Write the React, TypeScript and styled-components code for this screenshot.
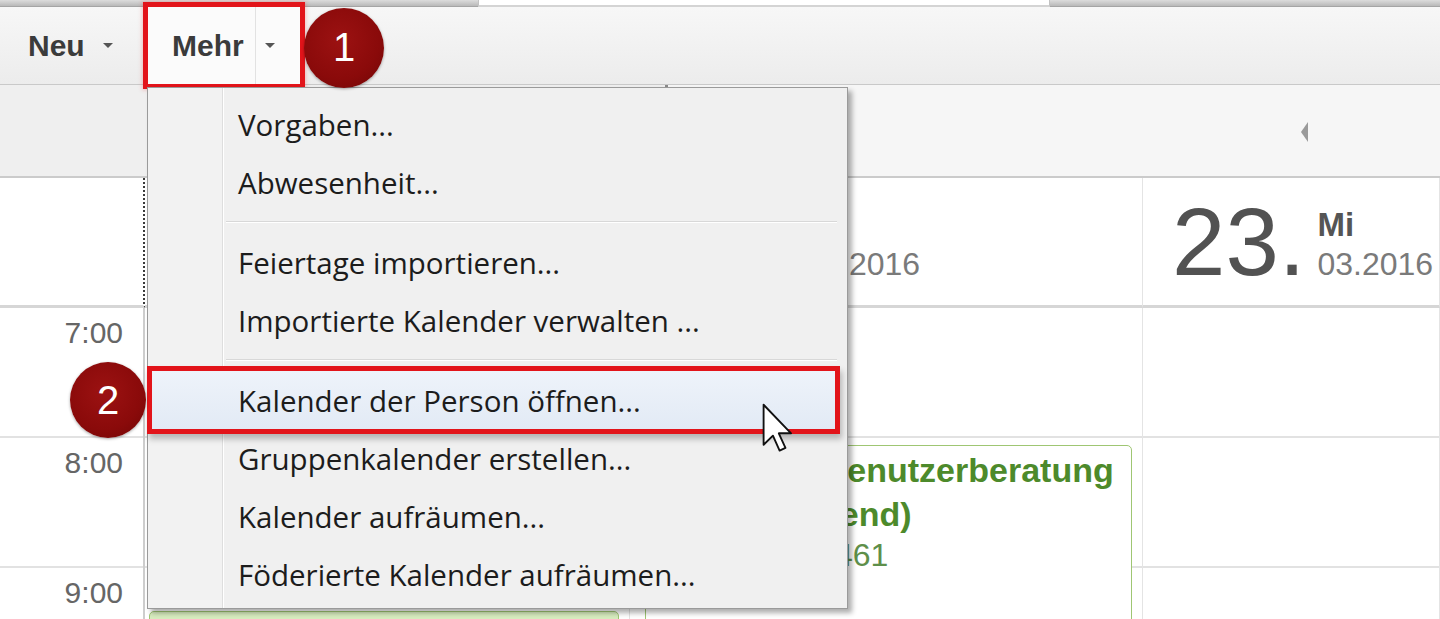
import React from 'react';
import styled, { createGlobalStyle } from 'styled-components';

const GlobalStyle = createGlobalStyle`
  html, body {
    margin: 0;
    padding: 0;
    background: #fff;
  }
  body {
    font-family: "Liberation Sans", Arial, sans-serif;
  }
`;

const HOUR = 130;
const FIRST_HOUR = 7;

const Page = styled.div`
  position: relative;
  width: 1440px;
  height: 619px;
  overflow: hidden;
  display: flex;
  flex-direction: column;
  background: #fff;
`;

/* ---------- tab strip ---------- */
const TabStrip = styled.div`
  display: flex;
  height: 7px;
  flex: none;
`;
const TabGap = styled.div<{ $w?: number }>`
  width: ${p => (p.$w ? `${p.$w}px` : 'auto')};
  flex: ${p => (p.$w ? 'none' : '1')};
  background: linear-gradient(#dcdcdc, #b9b9b9);
  border-bottom: 1px solid #a5a5a5;
`;
const ActiveTab = styled.div`
  width: 570px;
  background: #fff;
  border-left: 1px solid #c2c2c2;
  border-right: 1px solid #c2c2c2;
  border-bottom: 2px solid #d4d4d4;
`;

/* ---------- toolbar ---------- */
const Toolbar = styled.div`
  display: flex;
  align-items: center;
  height: 78px;
  flex: none;
  box-sizing: border-box;
  background: linear-gradient(#f7f7f7, #ececec);
  border-bottom: 1px solid #c9c9c9;
`;
const ToolButton = styled.div<{ $pressed?: boolean; $w: number; $pad: number }>`
  position: relative;
  display: flex;
  align-items: center;
  align-self: stretch;
  width: ${p => p.$w}px;
  box-sizing: border-box;
  padding-left: ${p => p.$pad}px;
  font-size: 30px;
  font-weight: bold;
  color: #3b3b3b;
  background: ${p => (p.$pressed ? '#fbfbfb' : 'transparent')};
  box-shadow: ${p => (p.$pressed ? '0 0 0 5px #e2141a, 0 0 4px 6px rgba(230, 40, 40, 0.25)' : 'none')};
  z-index: ${p => (p.$pressed ? 1 : 0)};
`;
const SplitLine = styled.span`
  align-self: stretch;
  width: 1px;
  margin-left: 11px;
  background: #e2e2e2;
`;
const Caret = styled.span<{ $gap: number }>`
  margin-left: ${p => p.$gap}px;
  width: 0;
  height: 0;
  border-left: 5px solid transparent;
  border-right: 5px solid transparent;
  border-top: 5px solid #555;
`;
const StepBadge = styled.div<{ $size: number }>`
  position: relative;
  z-index: 4;
  width: ${p => p.$size}px;
  height: ${p => p.$size}px;
  flex: none;
  border-radius: 50%;
  display: flex;
  align-items: center;
  justify-content: center;
  background: radial-gradient(circle at 45% 40%, #9c1212 0%, #8a0a0a 60%, #6f0606 100%);
  box-shadow: 0 1px 3px rgba(0, 0, 0, 0.35);
  color: #fff;
  font-size: 40px;
  font-family: "Liberation Sans", Arial, sans-serif;
`;
const ToolbarBadge = styled(StepBadge)`
  margin-left: 4px;
  margin-top: 4px;
`;

/* ---------- navigation row ---------- */
const NavRow = styled.div`
  display: flex;
  height: 93px;
  flex: none;
  box-sizing: border-box;
  border-bottom: 2px solid #cbcbcb;
`;
const NavLeft = styled.div`
  width: 665px;
  background: #efefef;
`;
const NavRight = styled.div`
  flex: 1;
  display: flex;
  align-items: center;
  padding-left: 633px;
  background: #f6f6f6;
  border-left: 3px solid #8a8a8a;
`;
const PrevArrow = styled.span`
  width: 0;
  height: 0;
  border-top: 10px solid transparent;
  border-bottom: 10px solid transparent;
  border-right: 7px solid #9a9a9a;
  margin-top: 2px;
`;

/* ---------- calendar ---------- */
const Calendar = styled.div`
  flex: 1;
  display: grid;
  grid-template-columns: 145px 485px 513px 1fr;
  grid-template-rows: 130px 1fr;
`;
const TimeHead = styled.div`
  box-sizing: border-box;
  border-bottom: 3px solid #d6d6d6;
  border-right: 2px dotted #3a3a3a;
`;
const DayHead = styled.div`
  display: flex;
  align-items: center;
  box-sizing: border-box;
  padding-left: 29px;
  border-bottom: 3px solid #d6d6d6;
  border-right: 1px solid #e4e4e4;
`;
const DayNum = styled.span`
  font-size: 96px;
  line-height: 1;
  color: #525252;
`;
const DayMeta = styled.div`
  display: flex;
  flex-direction: column;
  margin-left: 12px;
  margin-top: 8px;
`;
const DayName = styled.span`
  font-size: 33px;
  line-height: 36px;
  font-weight: bold;
  color: #555;
`;
const DayDate = styled.span`
  font-size: 32px;
  line-height: 42px;
  color: #7a7a7a;
`;
const TimeColumn = styled.div`
  border-right: 2px solid #cdcdcd;
`;
const TimeSlot = styled.div`
  height: ${HOUR}px;
  box-sizing: border-box;
  border-bottom: 2px solid #e2e2e2;
  padding: 8px 20px 0 0;
  text-align: right;
  font-size: 30px;
  color: #666;
`;
const DayColumn = styled.div`
  position: relative;
  border-right: 1px solid #e4e4e4;
`;
const HourSlot = styled.div`
  height: ${HOUR}px;
  box-sizing: border-box;
  border-bottom: 2px solid #e2e2e2;
`;
const EventBox = styled.div<{ $tint?: boolean }>`
  position: absolute;
  left: ${p => (p.$tint ? 4 : 15)}px;
  right: 10px;
  height: 320px;
  box-sizing: border-box;
  padding: 2px 8px 6px 20px;
  border: 1px solid #9fc673;
  border-radius: 5px;
  background: ${p => (p.$tint ? '#d7ecbf' : '#fff')};
  overflow: hidden;
  white-space: nowrap;
`;
const EventTitle = styled.div`
  font-size: 34px;
  line-height: 44px;
  font-weight: bold;
  color: #4d8a2b;
`;
const EventInfo = styled.div`
  font-size: 32px;
  line-height: 38px;
  color: #5e8f4a;
`;

/* ---------- dropdown menu ---------- */
const Menu = styled.div`
  position: absolute;
  left: 147px;
  top: 87px;
  z-index: 3;
  width: 701px;
  box-sizing: border-box;
  padding: 7px 0 5px;
  border: 1px solid #9a9a9a;
  background: linear-gradient(to right, #f2f2f2 0 74px, #dedede 74px 75px, #fff 75px 76px, #f0f0f0 76px);
  box-shadow: 4px 4px 5px rgba(0, 0, 0, 0.32);
  font-family: "Open Sans", "Noto Sans", sans-serif;
`;
const MenuItem = styled.div<{ $active?: boolean }>`
  position: relative;
  display: flex;
  align-items: center;
  height: 58px;
  box-sizing: border-box;
  margin: ${p => (p.$active ? '0 12px 0 4px' : '0')};
  padding-left: ${p => (p.$active ? 86 : 90)}px;
  font-size: 29.5px;
  color: #1c1c1c;
  background: ${p => (p.$active ? 'linear-gradient(#eef3fa, #e2eaf5)' : 'transparent')};
  box-shadow: ${p =>
    p.$active ? '0 0 0 5px #e2141a, 2px 5px 6px 5px rgba(0, 0, 0, 0.25)' : 'none'};
`;
const MenuSeparator = styled.div`
  height: 22px;
  display: flex;
  align-items: center;
  margin-left: 78px;
  margin-right: 10px;
  &::after {
    content: '';
    flex: 1;
    border-top: 1px solid #d8d8d8;
    border-bottom: 1px solid #fff;
  }
`;
const ItemBadge = styled(StepBadge)`
  position: absolute;
  left: -82px;
  top: 50%;
  margin-top: -38px;
`;
const Pointer = styled.svg`
  position: absolute;
  left: 610px;
  top: 32px;
  z-index: 5;
`;

type Event = { start: number; lines: string[]; info?: string; tint?: boolean };
type Day = { num: string; name: string; date: string; events: Event[] };

const hours = ['7:00', '8:00', '9:00'];

const days: Day[] = [
  { num: '21.', name: 'Mo', date: '03.2016', events: [{ start: 9.33, lines: ['Teamsitzung'], tint: true }] },
  {
    num: '22.',
    name: 'Di',
    date: '03.2016',
    events: [{ start: 8.05, lines: ['Offene IT-Benutzerberatung', '(Mo–Do abend)'], info: 'Durchwahl: 461' }],
  },
  { num: '23.', name: 'Mi', date: '03.2016', events: [] },
];

type MenuEntry = { label: string; active?: boolean } | 'sep';

const menu: MenuEntry[] = [
  { label: 'Vorgaben...' },
  { label: 'Abwesenheit...' },
  'sep',
  { label: 'Feiertage importieren...' },
  { label: 'Importierte Kalender verwalten ...' },
  'sep',
  { label: 'Kalender der Person öffnen...', active: true },
  { label: 'Gruppenkalender erstellen...' },
  { label: 'Kalender aufräumen...' },
  { label: 'Föderierte Kalender aufräumen...' },
];

const App = () => {
  return (
    <>
      <GlobalStyle />
      <Page>
        <TabStrip>
          <TabGap $w={478} />
          <ActiveTab />
          <TabGap />
        </TabStrip>

        <Toolbar>
          <ToolButton $w={148} $pad={28}>
            Neu
            <Caret $gap={18} />
          </ToolButton>
          <ToolButton $w={152} $pad={24} $pressed>
            Mehr
            <SplitLine />
            <Caret $gap={9} />
          </ToolButton>
          <ToolbarBadge $size={80}>1</ToolbarBadge>
        </Toolbar>

        <NavRow>
          <NavLeft />
          <NavRight>
            <PrevArrow />
          </NavRight>
        </NavRow>

        <Calendar>
          <TimeHead />
          {days.map(d => (
            <DayHead key={d.num}>
              <DayNum>{d.num}</DayNum>
              <DayMeta>
                <DayName>{d.name}</DayName>
                <DayDate>{d.date}</DayDate>
              </DayMeta>
            </DayHead>
          ))}

          <TimeColumn>
            {hours.map(h => (
              <TimeSlot key={h}>{h}</TimeSlot>
            ))}
          </TimeColumn>
          {days.map(d => (
            <DayColumn key={d.num}>
              {hours.map(h => (
                <HourSlot key={h} />
              ))}
              {d.events.map((ev, i) => (
                <EventBox key={i} $tint={ev.tint} style={{ top: (ev.start - FIRST_HOUR) * HOUR }}>
                  {ev.lines.map(l => (
                    <EventTitle key={l}>{l}</EventTitle>
                  ))}
                  {ev.info && <EventInfo>{ev.info}</EventInfo>}
                </EventBox>
              ))}
            </DayColumn>
          ))}
        </Calendar>

        <Menu>
          {menu.map((m, i) =>
            m === 'sep' ? (
              <MenuSeparator key={i} />
            ) : (
              <MenuItem key={i} $active={m.active}>
                {m.label}
                {m.active && (
                  <>
                    <ItemBadge $size={76}>2</ItemBadge>
                    <Pointer width="32" height="51" viewBox="0 0 12 19">
                      <path
                        d="M0.6 0.6 L0.6 15.6 L4.1 12.2 L6.6 17.8 L8.8 16.8 L6.3 11.3 L10.9 11.3 Z"
                        fill="#fff"
                        stroke="#111"
                        strokeWidth="0.7"
                        strokeLinejoin="round"
                      />
                    </Pointer>
                  </>
                )}
              </MenuItem>
            ),
          )}
        </Menu>
      </Page>
    </>
  );
};

export default App;
